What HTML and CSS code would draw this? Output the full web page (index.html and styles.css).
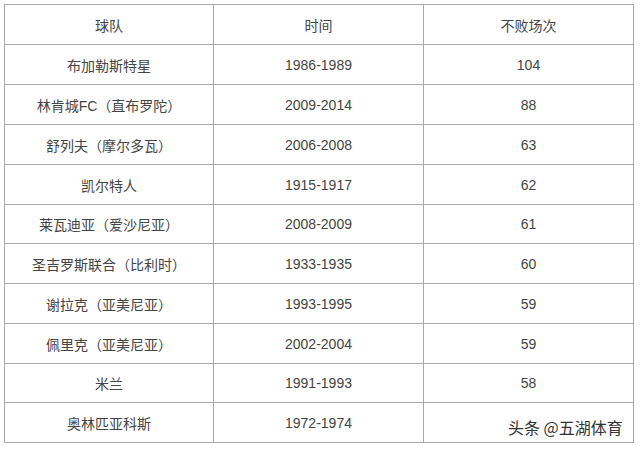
FILE: index.html
```html
<!DOCTYPE html>
<html lang="zh-CN">
<head>
<meta charset="utf-8">
<title>不败场次</title>
<link rel="stylesheet" href="styles.css">
</head>
<body>
<div class="page">
  <table class="stats">
    <colgroup>
      <col class="c1"><col class="c2"><col class="c3">
    </colgroup>
    <thead>
      <tr><th>球队</th><th>时间</th><th>不败场次</th></tr>
    </thead>
    <tbody>
      <tr><td>布加勒斯特星</td><td>1986-1989</td><td>104</td></tr>
      <tr><td>林肯城FC（直布罗陀）</td><td>2009-2014</td><td>88</td></tr>
      <tr><td>舒列夫（摩尔多瓦）</td><td>2006-2008</td><td>63</td></tr>
      <tr><td>凯尔特人</td><td>1915-1917</td><td>62</td></tr>
      <tr class="short"><td>莱瓦迪亚（爱沙尼亚）</td><td>2008-2009</td><td>61</td></tr>
      <tr><td>圣吉罗斯联合（比利时）</td><td>1933-1935</td><td>60</td></tr>
      <tr><td>谢拉克（亚美尼亚）</td><td>1993-1995</td><td>59</td></tr>
      <tr><td>佩里克（亚美尼亚）</td><td>2002-2004</td><td>59</td></tr>
      <tr class="short"><td>米兰</td><td>1991-1993</td><td>58</td></tr>
      <tr><td>奥林匹亚科斯</td><td>1972-1974</td><td></td></tr>
    </tbody>
  </table>
  <div class="watermark">头条 @五湖体育</div>
</div>
</body>
</html>
```
FILE: styles.css
```css
html, body {
  margin: 0;
  padding: 0;
  background: #ffffff;
}
.page {
  position: relative;
  width: 640px;
  height: 449px;
  padding: 4px 0 0 4px;
  box-sizing: border-box;
}
.stats {
  border-collapse: collapse;
  table-layout: fixed;
  width: 630px;
  font-family: "Liberation Sans", "Noto Sans CJK SC", sans-serif;
  font-size: 14px;
  color: #444444;
}
.stats col.c1 { width: 209px; }
.stats col.c2 { width: 210px; }
.stats col.c3 { width: 210px; }
.stats th,
.stats td {
  border: 1px solid #a9a9a9;
  height: 40px;
  padding: 0;
  text-align: center;
  vertical-align: middle;
  font-weight: normal;
  box-sizing: border-box;
}
.stats tr.short td {
  height: 39px;
}
.watermark {
  position: absolute;
  left: 508px;
  top: 416px;
  font-family: "Noto Sans CJK SC", sans-serif;
  font-size: 16px;
  line-height: 22px;
  color: #333333;
  text-shadow: 0 0 2px #ffffff, 0 0 2px #ffffff;
}
```
